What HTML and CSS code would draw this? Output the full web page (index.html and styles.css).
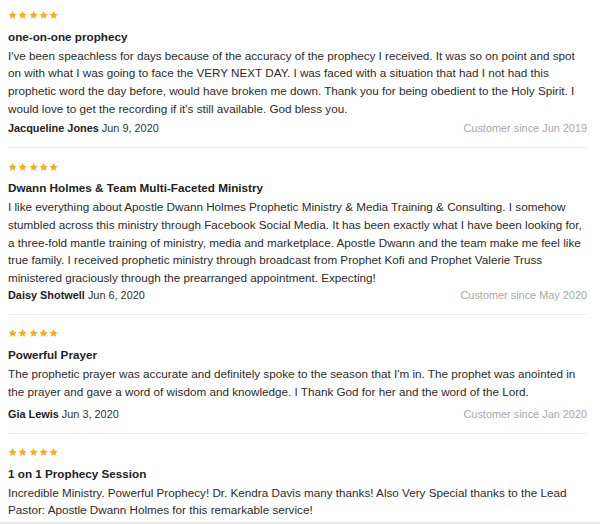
FILE: index.html
```html
<!DOCTYPE html>
<html>
<head>
<meta charset="utf-8">
<link rel="stylesheet" href="styles.css">
</head>
<body>
<svg width="0" height="0" class="defs">
  <defs>
    <symbol id="star" viewBox="0 0 24 24"><path d="M12 1.5l3.2 7 7.6.7-5.8 5.1 1.8 7.6L12 17.9l-6.8 4 1.8-7.6-5.8-5.1 7.6-.7z"/></symbol>
  </defs>
</svg>
<div class="reviews">
  <div class="review">
    <div class="stars"><svg><use href="#star"/></svg><svg><use href="#star"/></svg><svg><use href="#star"/></svg><svg><use href="#star"/></svg><svg><use href="#star"/></svg></div>
    <div class="title">one-on-one prophecy</div>
    <p class="body">I've been speachless for days because of the accuracy of the prophecy I received. It was so on point and spot on with what I was going to face the VERY NEXT DAY. I was faced with a situation that had I not had this prophetic word the day before, would have broken me down. Thank you for being obedient to the Holy Spirit. I would love to get the recording if it's still available. God bless you.</p>
    <div class="foot foot-loose"><span><b>Jacqueline Jones</b> Jun 9, 2020</span><span class="since">Customer since Jun 2019</span></div>
  </div>
  <div class="review">
    <div class="stars"><svg><use href="#star"/></svg><svg><use href="#star"/></svg><svg><use href="#star"/></svg><svg><use href="#star"/></svg><svg><use href="#star"/></svg></div>
    <div class="title">Dwann Holmes &amp; Team Multi-Faceted Ministry</div>
    <p class="body">I like everything about Apostle Dwann Holmes Prophetic Ministry &amp; Media Training &amp; Consulting. I somehow stumbled across this ministry through Facebook Social Media. It has been exactly what I have been looking for, a three-fold mantle training of ministry, media and marketplace. Apostle Dwann and the team make me feel like true family. I received prophetic ministry through broadcast from Prophet Kofi and Prophet Valerie Truss ministered graciously through the prearranged appointment. Expecting!</p>
    <div class="foot foot-tight"><span><b>Daisy Shotwell</b> Jun 6, 2020</span><span class="since">Customer since May 2020</span></div>
  </div>
  <div class="review">
    <div class="stars"><svg><use href="#star"/></svg><svg><use href="#star"/></svg><svg><use href="#star"/></svg><svg><use href="#star"/></svg><svg><use href="#star"/></svg></div>
    <div class="title">Powerful Prayer</div>
    <p class="body body-short">The prophetic prayer was accurate and definitely spoke to the season that I'm in. The prophet was anointed in the prayer and gave a word of wisdom and knowledge. I Thank God for her and the word of the Lord.</p>
    <div class="foot"><span><b>Gia Lewis</b> Jun 3, 2020</span><span class="since">Customer since Jan 2020</span></div>
  </div>
  <div class="review">
    <div class="stars"><svg><use href="#star"/></svg><svg><use href="#star"/></svg><svg><use href="#star"/></svg><svg><use href="#star"/></svg><svg><use href="#star"/></svg></div>
    <div class="title">1 on 1 Prophecy Session</div>
    <p class="body">Incredible Ministry. Powerful Prophecy! Dr. Kendra Davis many thanks! Also Very Special thanks to the Lead Pastor: Apostle Dwann Holmes for this remarkable service!</p>
  </div>
</div>
<div class="bottombar"></div>
</body>
</html>
```
FILE: styles.css
```css
html, body { margin: 0; padding: 0; background: #fff; overflow: hidden; }
body {
  font-family: "Liberation Sans", Arial, sans-serif;
  font-size: 11.7px;
  color: #333;
  padding: 0 10px 0 8px;
}
.defs { position: absolute; }
.reviews { display: flex; flex-direction: column; }
.review {
  padding: 13.5px 0 12px;
  border-bottom: 1px solid #ececec;
  margin-right: 3px;
}
.review:first-child { padding-top: 10px; }
.review:last-child { border-bottom: none; }
.stars { display: flex; gap: 1.1px; height: 10px; }
.stars svg { width: 9.2px; height: 10px; fill: #fdaa12; }
.title {
  margin-top: 8.5px;
  font-size: 11.7px;
  font-weight: bold;
  color: #222;
  line-height: 15px;
}
.body {
  margin: 3px -3px 0 0;
  line-height: 17.7px;
  color: #2b2b2b;
}
.body-short { margin-bottom: 6.5px; }
.foot {
  margin-top: 3px;
  display: flex;
  justify-content: space-between;
  font-size: 10.9px;
  line-height: 14px;
}
.foot-loose { margin-top: 4px; }
.foot-tight { margin-top: 1px; }
.foot b { color: #222; }
.since { color: #a8a8a8; }
.bottombar {
  position: fixed;
  left: 0; right: 0; bottom: 0;
  height: 2px;
  background: #e8e8e8;
}
```
